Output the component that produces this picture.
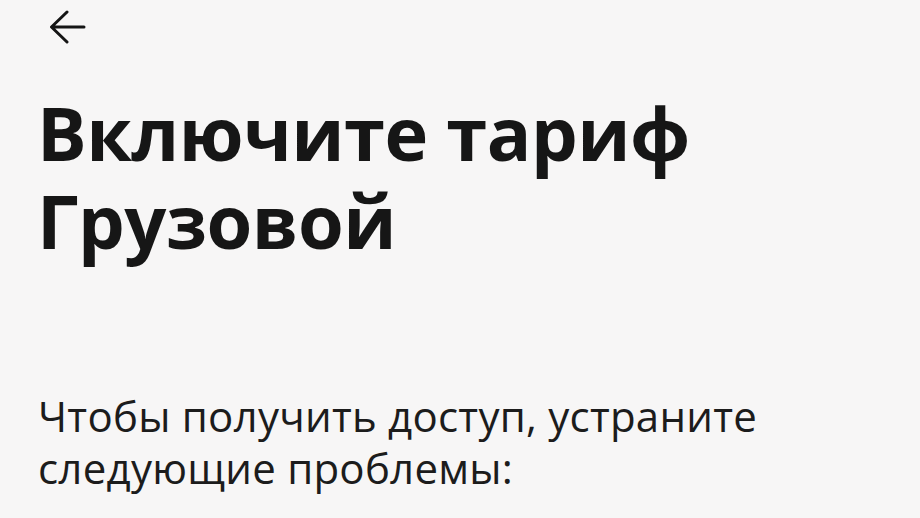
import React from "react";

function BackArrow() {
  return (
    <svg width="40" height="36" viewBox="0 0 40 36" fill="none" className="block">
      <path
        d="M36 17H4M19 2L3.5 17L19 32"
        stroke="#151515"
        strokeWidth="3"
        strokeLinecap="round"
        strokeLinejoin="round"
      />
    </svg>
  );
}

export default function App() {
  return (
    <div
      className="w-[920px] h-[518px] overflow-hidden bg-[#f7f6f6] text-[#161616]"
      style={{ fontFamily: '"Open Sans", "Noto Sans", sans-serif' }}
    >
      <div className="pl-[48px] pt-[10px]">
        <BackArrow />
      </div>
      <h1 className="pl-[37px] mt-[43px] text-[74px] leading-[88px] font-bold tracking-[-0.5px]">
        Включите тариф
        <br />
        Грузовой
      </h1>
      <p className="pl-[38px] mt-[125px] text-[42px] leading-[52px] tracking-[0.25px] text-[#1c1c1c]">
        Чтобы получить доступ, устраните
        <br />
        следующие проблемы:
      </p>
    </div>
  );
}
